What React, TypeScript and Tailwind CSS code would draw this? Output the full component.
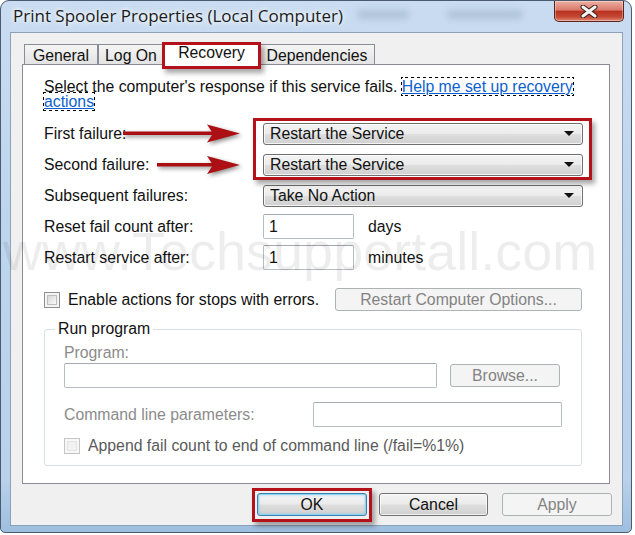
import React from "react";

const body = "font-['Liberation_Sans',Arial,sans-serif]";

const btnGrad =
  "bg-[linear-gradient(to_bottom,#f4f4f4_0%,#ebebeb_48%,#dedede_52%,#d0d0d0_100%)]";

function Dropdown({ value }: { value: string }) {
  return (
    <div
      className={`h-[22px] w-[320px] flex items-center justify-between pl-[6px] pr-[8px] rounded-[3px] border border-[#707070] ${btnGrad} shadow-[inset_0_0_0_1px_rgba(255,255,255,0.75)]`}
    >
      <span className="leading-[18px]">{value}</span>
      <svg width="10" height="5" viewBox="0 0 10 5">
        <path d="M0 0h10L5 5z" fill="#111" />
      </svg>
    </div>
  );
}

function TextBox({ value = "", w }: { value?: string; w: string }) {
  return (
    <div
      className={`${w} h-[25px] flex items-center pl-[5px] bg-white border border-[#b7bbc2] border-t-[#a4a8af] rounded-[2px]`}
    >
      {value}
    </div>
  );
}

function Checkbox({ disabled }: { disabled?: boolean }) {
  return (
    <div
      className={`w-[16px] h-[16px] shrink-0 border p-[2px] ${
        disabled ? "border-[#c4c4c4] bg-[#f7f7f7]" : "border-[#8e8f8f] bg-[#f4f4f4]"
      }`}
    >
      <div
        className={`w-full h-full border ${
          disabled
            ? "border-[#e3e3e3] bg-[#f2f2f2]"
            : "border-[#bcbcbc] bg-[linear-gradient(135deg,#d8d8d8,#fafafa)]"
        }`}
      />
    </div>
  );
}

function DisabledButton({ label, w }: { label: string; w: string }) {
  return (
    <div
      className={`${w} h-[23px] flex items-center justify-center rounded-[3px] border border-[#adb2b5] bg-[#f4f4f4] text-[#838383]`}
    >
      {label}
    </div>
  );
}

function Tab({ label, w }: { label: string; w: string }) {
  return (
    <div
      className={`${w} h-[21px] flex items-center justify-center border border-b-0 border-[#898c95] bg-[linear-gradient(to_bottom,#f5f5f5,#e2e2e2)] leading-[18px] pt-[1px]`}
    >
      {label}
    </div>
  );
}

function RedBox({ className }: { className: string }) {
  return (
    <div
      className={`absolute ${className} border-[3px] border-[#b3121b] pointer-events-none shadow-[3px_4px_5px_rgba(0,0,0,0.35)]`}
    />
  );
}

export default function App() {
  return (
    <div className={`relative w-[635px] h-[535px] bg-white overflow-hidden text-[15.8px] text-[#111] ${body}`}>
      {/* window frame */}
      <div className="w-[632px] h-[533px] rounded-t-[9px] rounded-b-[5px] border border-[#4b5b6e] bg-[linear-gradient(to_bottom,#c9dcf1_0%,#bed5ee_40%,#b9d1ea_90%,#9ebedf_100%)] flex flex-col">
        {/* title bar */}
        <div className="h-[31px] flex items-start shrink-0">
          <span className="ml-[12px] mt-[4px] leading-[21px] text-[17px] text-[#1b1b1b] font-['Open_Sans',sans-serif] [text-shadow:0_0_8px_#fff,0_0_4px_#fff]">
            Print Spooler Properties (Local Computer)
          </span>
          <span className="ml-[14px] mt-[9px] w-[52px] h-[9px] rounded-full bg-[#8d9fb3]/40 blur-[3px]" />
          <span className="ml-[38px] mt-[9px] w-[76px] h-[9px] rounded-full bg-[#8d9fb3]/40 blur-[3px]" />
          <div className="ml-auto mr-[7px] w-[70px] h-[21px] rounded-b-[5px] border border-t-0 border-[#5a231b] bg-[linear-gradient(to_bottom,#ebb0a2_0%,#d8796a_45%,#b8321f_52%,#c54a35_80%,#e08a72_100%)] shadow-[inset_0_0_0_1px_rgba(255,255,255,0.35)] flex items-center justify-center">
            <svg width="20" height="13" viewBox="0 0 20 13">
              <path d="M4 2L16 11M16 2L4 11" stroke="#3b1d18" strokeWidth="5" strokeLinecap="round" />
              <path d="M4 2L16 11M16 2L4 11" stroke="#f4f4f4" strokeWidth="3" strokeLinecap="round" />
            </svg>
          </div>
        </div>

        {/* client area */}
        <div className="ml-[9px] w-[613px] h-[494px] border border-[#8ca1b7] bg-[#f0f0f0] flex flex-col">
          {/* tabs */}
          <div className="ml-[13px] mt-[9px] h-[23px] flex items-end">
            <Tab label="General" w="w-[74px]" />
            <Tab label="Log On" w="w-[66px]" />
            <div className="relative z-10 w-[95px] h-[23px] flex items-start justify-center pt-[1px] leading-[18px] border border-b-0 border-[#898c95] bg-white">
              Recovery
              <RedBox className="-left-[3px] -right-[3px] -top-[1px] -bottom-[4px]" />
            </div>
            <Tab label="Dependencies" w="w-[116px]" />
          </div>

          {/* tab panel */}
          <div className="-mt-px ml-[11px] w-[588px] h-[420px] border border-[#898c95] bg-white pl-[21px] pt-[14px]">
            <div className="w-[540px] leading-[15px]">
              Select the computer's response if this service fails.{" "}
              <span className="text-[#0c5fce] underline outline-1 outline-dotted outline-black">
                Help me set up recovery actions
              </span>
            </div>

            <div className="mt-[9px] flex">
              <div className="w-[219px]">
                <div className="h-[31px] flex items-center">First failure:</div>
                <div className="h-[31px] flex items-center">Second failure:</div>
              </div>
              <div className="relative">
                <div className="h-[31px] flex items-center">
                  <Dropdown value="Restart the Service" />
                </div>
                <div className="h-[31px] flex items-center">
                  <Dropdown value="Restart the Service" />
                </div>
                <RedBox className="-left-[10px] -right-[9px] top-0 bottom-0" />
              </div>
            </div>

            <div className="h-[31px] flex items-center">
              <div className="w-[219px]">Subsequent failures:</div>
              <Dropdown value="Take No Action" />
            </div>
            <div className="h-[31px] flex items-center">
              <div className="w-[219px]">Reset fail count after:</div>
              <TextBox value="1" w="w-[91px]" />
              <span className="ml-[14px]">days</span>
            </div>
            <div className="h-[31px] flex items-center">
              <div className="w-[219px]">Restart service after:</div>
              <TextBox value="1" w="w-[91px]" />
              <span className="ml-[14px]">minutes</span>
            </div>

            <div className="mt-[15px] w-[538px] h-[23px] flex items-center">
              <Checkbox />
              <span className="ml-[8px]">Enable actions for stops with errors.</span>
              <div className="ml-auto">
                <DisabledButton label="Restart Computer Options..." w="w-[247px]" />
              </div>
            </div>

            <fieldset className="mt-[9px] w-[538px] border border-[#d5dfe5] rounded-[3px] px-[19px] pb-[11px]">
              <legend className="-ml-[9px] px-[3px] leading-[18px]">Run program</legend>
              <div className="mt-[6px] leading-[18px] text-[#8b8b8b]">Program:</div>
              <div className="mt-px flex items-center">
                <TextBox w="w-[373px]" />
                <div className="ml-[13px]">
                  <DisabledButton label="Browse..." w="w-[110px]" />
                </div>
              </div>
              <div className="mt-[14px] flex items-center">
                <span className="text-[#8b8b8b]">Command line parameters:</span>
                <div className="ml-auto">
                  <TextBox w="w-[249px]" />
                </div>
              </div>
              <div className="mt-[11px] h-[16px] flex items-center">
                <Checkbox disabled />
                <span className="ml-[8px] text-[#5a5a5a]">
                  Append fail count to end of command line (/fail=%1%)
                </span>
              </div>
            </fieldset>
          </div>

          {/* dialog buttons */}
          <div className="mt-[9px] flex justify-end pr-[10px]">
            <div className="relative">
              <div className={`w-[110px] h-[23px] flex items-center justify-center rounded-[3px] border border-[#3c7fb1] ${btnGrad} shadow-[inset_0_0_0_1px_#8ad4f2,inset_0_0_3px_1px_rgba(120,200,240,0.6)]`}>
                OK
              </div>
              <RedBox className="-left-[5px] -right-[5px] -top-[5px] -bottom-[6px]" />
            </div>
            <div className={`ml-[12px] w-[109px] h-[23px] flex items-center justify-center rounded-[3px] border border-[#707070] ${btnGrad} shadow-[inset_0_0_0_1px_rgba(255,255,255,0.7)]`}>
              Cancel
            </div>
            <div className="ml-[14px]">
              <DisabledButton label="Apply" w="w-[110px]" />
            </div>
          </div>
        </div>
      </div>

      {/* annotation arrows */}
      <svg
        className="absolute left-0 top-0 pointer-events-none drop-shadow-[2px_2px_2px_rgba(0,0,0,0.45)]"
        width="635"
        height="535"
      >
        <rect x="123" y="131.5" width="92" height="3.5" fill="#a90f12" />
        <path d="M240 133.5L207 124.5L213 133.5L207 142.5Z" fill="#ad1014" />
        <rect x="157" y="163" width="58" height="3.5" fill="#a90f12" />
        <path d="M240 165L207 156L213 165L207 174Z" fill="#ad1014" />
      </svg>

      {/* watermark */}
      <div className="absolute left-[3px] top-[224px] text-[54px] leading-none whitespace-nowrap text-black/[0.07] pointer-events-none">
        www.Techsupportall.com
      </div>
    </div>
  );
}
